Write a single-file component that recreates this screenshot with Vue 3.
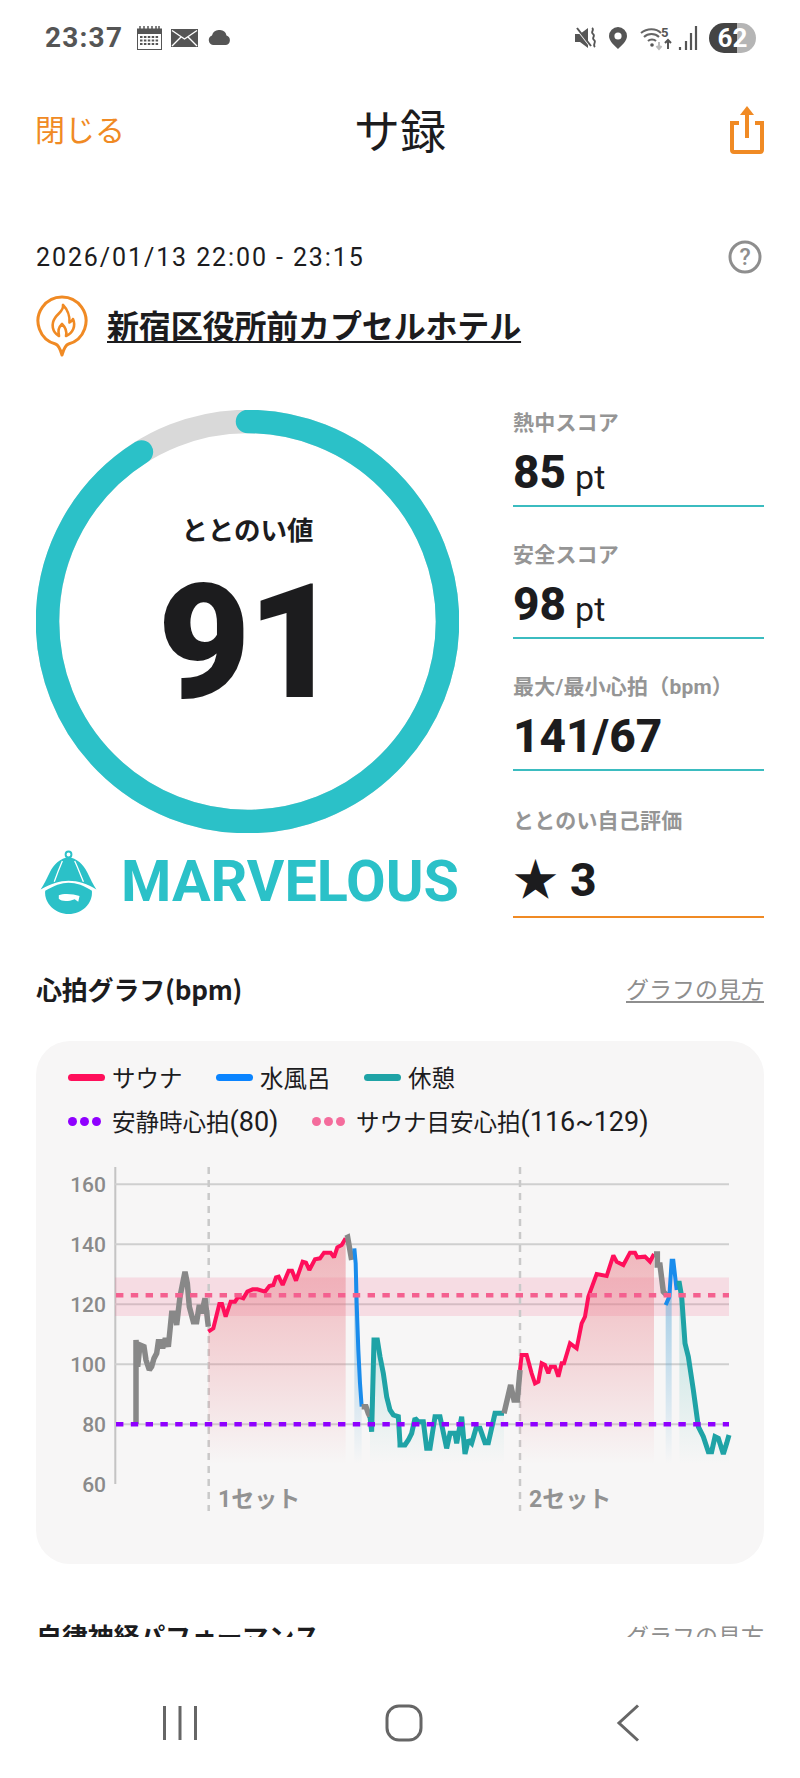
<script setup>
// traced from the graph: [x, y] in two frames, a starts at page x 60, b at page x 400
const fa = (pts) => pts.map(([x, y]) => [60 + x / 3, 1150 + y / 3]);
const fb = (pts) => pts.map(([x, y]) => [400 + x / 3, 1150 + y / 3]);

const segs = [
  { type: 'gray', pts: fa([[228,822],[228,570],[233,650],[240,585],[252,590],[258,630],[268,660],[275,650],[282,625],[290,610],[295,575],[305,575],[308,595],[316,565],[325,590],[335,490],[345,490],[350,525],[360,440],[375,365],[382,400],[388,470],[400,515],[410,515],[418,465],[425,490],[435,445],[445,530]]) },
  { type: 'red', pts: fa([[445,545],[460,535],[478,462],[486,462],[497,500],[512,455],[525,455],[535,440],[550,445],[562,425],[578,418],[592,418],[615,425],[628,408],[640,405],[648,382],[656,380],[668,405],[686,362],[696,362],[708,392],[728,335],[738,338],[748,360],[765,328],[780,325],[792,308],[812,308],[822,322],[832,292],[845,285],[857,265]]) },
  { type: 'gray', pts: fa([[857,265],[863,262],[875,330]]) },
  { type: 'blue', pts: fa([[883,295],[887,340],[890,460],[895,600],[900,700],[905,770]]) },
  { type: 'gray', pts: fa([[905,770],[918,770],[925,790],[930,800]]) },
  { type: 'teal', pts: [...fa([[930,800],[935,845],[942,570],[952,570],[960,620],[970,670],[980,740],[990,780],[1000,795],[1015,800],[1020,880]]), ...fb([[0,885],[15,885],[25,870],[35,850],[45,805],[55,815],[70,815],[80,895],[90,895],[105,800],[120,800],[140,895],[150,850],[165,850],[170,880],[185,800],[195,912],[205,870],[215,880],[228,835],[240,835],[255,878],[265,878],[285,790],[312,790]])] },
  { type: 'gray', pts: fb([[312,790],[332,705],[342,750],[352,750],[360,660]]) },
  { type: 'red', pts: fb([[360,660],[365,615],[380,615],[395,670],[405,700],[415,695],[425,640],[435,645],[445,670],[452,650],[465,650],[475,680],[485,640],[492,640],[510,580],[530,595],[545,520],[555,500],[565,440],[590,372],[620,378],[640,316],[650,335],[670,345],[690,308],[705,308],[712,322],[735,320],[750,335],[762,312]]) },
  { type: 'gray', pts: fb([[762,312],[772,312],[772,345],[780,345],[790,425],[800,435]]) },
  { type: 'blue', areaMax: 673, pts: fb([[797,465],[808,440],[815,332],[820,332],[830,420]]) },
  { type: 'teal', areaMin: 679, pts: fb([[830,400],[838,400],[845,440],[855,580],[865,620],[880,720],[895,830],[910,860],[925,905],[935,905],[945,860],[955,865],[970,912],[980,880],[987,855]]) },
];

const areaOf = (s) => {
  const pts = s.pts.filter(([x]) => x <= (s.areaMax ?? 9999) && x >= (s.areaMin ?? 0));
  return [...pts, [pts[pts.length - 1][0], 1464], [pts[0][0], 1464]].map((p) => p.join(',')).join(' ');
};

const lines = segs.map((s) => ({
  type: s.type,
  line: s.pts.map((p) => p.join(',')).join(' '),
  area: s.type === 'gray' ? null : areaOf(s),
}));

const grid = [160, 140, 120, 100, 80];
const yOf = (v) => 1184.3 + (160 - v) * 3;
const ticks = [160, 140, 120, 100, 80, 60];

const stats = [
  { label: '熱中スコア', value: '85', unit: 'pt' },
  { label: '安全スコア', value: '98', unit: 'pt' },
  { label: '最大/最小心拍（bpm）', value: '141/67', unit: '' },
];
</script>

<template>
  <div class="screen">
    <div class="status">
      <div class="status-left">
        <span class="time">23:37</span>
        <svg class="ic-cal" width="25" height="24" viewBox="0 0 25 24">
          <rect x="0.5" y="3" width="24" height="20.5" fill="none" stroke="#555" />
          <rect x="0" y="3" width="25" height="5" fill="#555" />
          <path d="M3 0v4M7 0v4M11 0v4M15 0v4M19 0v4M22 0v4" stroke="#555" stroke-width="1.5" />
          <path d="M3 11h19M3 14.5h19M3 18h19" stroke="#555" stroke-width="2" stroke-dasharray="2.5 1.4" />
        </svg>
        <svg class="ic-mail" width="27" height="18" viewBox="0 0 27 18">
          <rect width="27" height="18" fill="#555" />
          <path d="M1 1.5 13.5 10 26 1.5M1 17l9-9M26 17l-9-9" fill="none" stroke="#fff" stroke-width="1.4" />
        </svg>
        <svg class="ic-cloud" width="23" height="15" viewBox="0 0 23 15">
          <path d="M5 15a5 5 0 0 1-1-9.6A7.5 7.5 0 0 1 11.5 0a7 7 0 0 1 7 5.4A5 5 0 0 1 18 15Z" fill="#555" />
        </svg>
      </div>
      <div class="status-right">
        <svg class="ic-mute" width="22" height="22" viewBox="0 0 22 22">
          <path d="M0 7h5l8-6v20l-8-6H0Z" fill="#555" />
          <path d="M1 1l14 18" stroke="#fff" stroke-width="2" />
          <path d="M2 1l14 18" stroke="#555" stroke-width="2" />
          <path d="M17 1c3 2-2 4 1 6s-2 4 1 6-2 4 1 7" fill="none" stroke="#555" stroke-width="1.8" />
        </svg>
        <svg class="ic-pin" width="18" height="22" viewBox="0 0 18 22">
          <path d="M9 0a9 9 0 0 1 9 9c0 5-5 9-9 13C5 18 0 14 0 9a9 9 0 0 1 9-9Z" fill="#555" />
          <circle cx="9" cy="9" r="3.6" fill="#fff" />
        </svg>
        <svg class="ic-wifi" width="32" height="26" viewBox="0 0 32 26">
          <path d="M1 8c6-5 15-5 20 0M4 12c4-4 11-4 15 0M8 16c2-2 6-2 8 0" fill="none" stroke="#666" stroke-width="2" />
          <circle cx="12" cy="20" r="1.8" fill="#555" />
          <text x="21" y="12" class="wifi-num">5</text>
          <path d="M19 17v7M16.500 21l2.500 3 2.500-3" fill="none" stroke="#bbb" stroke-width="2" />
          <path d="M28 24v-9M25 18l3-3 3 3" fill="none" stroke="#555" stroke-width="2" />
        </svg>
        <svg class="ic-signal" width="20" height="24" viewBox="0 0 20 24">
          <path d="M2 24v-3M8 24v-9M13 24V7M18 24V0" stroke="#555" stroke-width="2.200" />
        </svg>
        <div class="battery"><span class="battery-num">62</span></div>
      </div>
    </div>

    <header class="head">
      <a class="close">閉じる</a>
      <h1 class="title">サ録</h1>
      <svg class="share" width="34" height="48" viewBox="0 0 34 48">
        <path d="M9 17H2v27a2 2 0 0 0 2 2h26a2 2 0 0 0 2-2V17h-7" fill="none" stroke="#f08a24" stroke-width="4" />
        <path d="M17 32V6" stroke="#f08a24" stroke-width="4" />
        <path d="M17 0l7 9H10Z" fill="#f08a24" />
      </svg>
    </header>

    <main class="content">
      <div class="date-row">
        <span class="date">2026/01/13 22:00 - 23:15</span>
        <svg width="34" height="34" viewBox="0 0 34 34">
          <circle cx="17" cy="17" r="15" fill="none" stroke="#8e8e8e" stroke-width="3" />
          <text x="17" y="25" text-anchor="middle" class="help">?</text>
        </svg>
      </div>

      <div class="place-row">
        <svg width="52" height="62" viewBox="0 0 52 62">
          <path d="M19.500 49A24 24 0 1 1 32.500 49C29.500 50 28 53 26 60 24 53 22.500 50 19.500 49Z" fill="none" stroke="#f08a24" stroke-width="3" stroke-linejoin="round" />
          <path d="M27 10C28 16 22 18 19 23 15 29 16 37 23 41 22 36 22 33 26 29 30 33 31 37 30 41 37 38 40 31 37 24 36 26 35 27 33.500 27.500 34 21 31 14 27 10Z" fill="none" stroke="#f08a24" stroke-width="2.600" stroke-linejoin="round" />
        </svg>
        <a class="place">新宿区役所前カプセルホテル</a>
      </div>

      <section class="score">
        <div class="score-left">
          <div class="ring">
            <svg width="423" height="423" viewBox="0 0 423 423">
              <circle cx="211.500" cy="211.500" r="200" fill="none" stroke="#d9d9d9" stroke-width="23.500" />
              <circle cx="211.500" cy="211.500" r="200" fill="none" stroke="#2bc1c8" stroke-width="23.500" stroke-linecap="round" pathLength="100" stroke-dasharray="91.100 100" transform="rotate(-90 211.500 211.500)" />
            </svg>
            <div class="ring-text">
              <span class="ring-label">ととのい値</span>
              <span class="ring-num">91</span>
            </div>
          </div>
          <div class="rank">
            <svg width="59" height="66" viewBox="28 30 176 198">
              <circle cx="116" cy="44" r="9" fill="none" stroke="#2bc1c8" stroke-width="6" />
              <path d="M116 52C92 56 70 74 58 100 48 120 40 138 30 152 60 135 90 125 116 125 145 125 175 135 202 152 192 138 184 120 174 100 162 74 140 56 116 52Z" fill="#2bc1c8" />
              <path d="M97 64C88 85 80 105 72 128M135 64C145 85 152 105 162 128" fill="none" stroke="#fff" stroke-width="4" />
              <path d="M44 156C70 140 95 131 116 131 140 131 165 140 188 156 192 195 157 228 116 228 76 228 40 195 44 156Z" fill="#2bc1c8" />
              <path d="M86 170C100 163 130 165 150 172L146 190 135 182C115 190 95 190 86 181Z" fill="#fff" />
            </svg>
            <span class="rank-name">MARVELOUS</span>
          </div>
        </div>

        <div class="score-right">
          <div v-for="s in stats" :key="s.label" class="stat">
            <div class="stat-label">{{ s.label }}</div>
            <div class="stat-value"><b>{{ s.value }}</b><span v-if="s.unit" class="unit">{{ s.unit }}</span></div>
          </div>
          <div class="stat self">
            <div class="stat-label">ととのい自己評価</div>
            <div class="stat-value"><span class="star">★</span><b>3</b></div>
          </div>
        </div>
      </section>

      <div class="section-head first">
        <h2>心拍グラフ(bpm)</h2>
        <a>グラフの見方</a>
      </div>

      <div class="card">
        <div class="legend">
          <span class="bar red"></span><span class="lg-text">サウナ</span>
          <span class="bar blue"></span><span class="lg-text">水風呂</span>
          <span class="bar teal"></span><span class="lg-text">休憩</span>
        </div>
        <div class="legend">
          <span class="dots purple"><i></i><i></i><i></i></span><span class="lg-text">安静時心拍<span class="lg-num">(80)</span></span>
          <span class="dots pink"><i></i><i></i><i></i></span><span class="lg-text">サウナ目安心拍<span class="lg-num">(116~129)</span></span>
        </div>

        <svg class="chart" width="728" height="370" viewBox="36 1150 728 370">
          <defs>
            <linearGradient id="gRed" gradientUnits="userSpaceOnUse" x1="0" y1="1240" x2="0" y2="1464">
              <stop offset="0" stop-color="#e8737f" stop-opacity="0.5" />
              <stop offset="0.5" stop-color="#e8737f" stop-opacity="0.26" />
              <stop offset="1" stop-color="#e8737f" stop-opacity="0" />
            </linearGradient>
            <linearGradient id="gBlue" gradientUnits="userSpaceOnUse" x1="0" y1="1300" x2="0" y2="1464">
              <stop offset="0" stop-color="#5aa9d8" stop-opacity="0.5" />
              <stop offset="1" stop-color="#5aa9d8" stop-opacity="0" />
            </linearGradient>
            <linearGradient id="gTeal" gradientUnits="userSpaceOnUse" x1="0" y1="1300" x2="0" y2="1464">
              <stop offset="0" stop-color="#40b5b0" stop-opacity="0.3" />
              <stop offset="1" stop-color="#40b5b0" stop-opacity="0" />
            </linearGradient>
          </defs>

          <line x1="115.300" y1="1167" x2="115.300" y2="1484" class="axis" />
          <line v-for="v in grid" :key="v" x1="115" x2="729" :y1="yOf(v)" :y2="yOf(v)" class="grid" />
          <rect x="115" y="1277.500" width="614" height="38.500" fill="#f6678f" fill-opacity="0.18" />

          <line x1="208.700" y1="1167" x2="208.700" y2="1511" class="split" />
          <line x1="520" y1="1167" x2="520" y2="1511" class="split" />

          <template v-for="(l, i) in lines" :key="'a' + i">
            <polygon v-if="l.area" :points="l.area" :fill="l.type === 'red' ? 'url(#gRed)' : l.type === 'blue' ? 'url(#gBlue)' : 'url(#gTeal)'" />
          </template>
          <polyline v-for="(l, i) in lines" :key="'l' + i" :points="l.line" :class="['hr', l.type]" />

          <line x1="116" y1="1295.300" x2="729" y2="1295.300" class="limit pink" />
          <line x1="116" y1="1424.300" x2="729" y2="1424.300" class="limit purple" />

          <text v-for="v in ticks" :key="v" x="106" :y="yOf(v) + 7.500" class="tick">{{ v }}</text>
          <text x="218" y="1507" class="set">1セット</text>
          <text x="529" y="1507" class="set">2セット</text>
        </svg>
      </div>

      <div class="section-head second">
        <h2>自律神経パフォーマンス</h2>
        <a>グラフの見方</a>
      </div>
    </main>

    <nav class="nav">
      <svg width="34" height="34" viewBox="0 0 34 34">
        <path d="M1.500 0v34M17 0v34M32.500 0v34" stroke="#666" stroke-width="3" />
      </svg>
      <svg class="home" width="38" height="38" viewBox="0 0 38 38">
        <rect x="2" y="2" width="34" height="34" rx="12" fill="none" stroke="#666" stroke-width="3" />
      </svg>
      <svg class="back" width="24" height="38" viewBox="0 0 24 38">
        <path d="M22 1.500 3 19l19 17.500" fill="none" stroke="#666" stroke-width="3" />
      </svg>
    </nav>
  </div>
</template>

<style>
html, body { margin: 0; background: #fff; }
</style>

<style scoped>
.screen {
  width: 800px;
  height: 1778px;
  display: flex;
  flex-direction: column;
  overflow: hidden;
  background: #fff;
  color: #1c1c1e;
  font-family: Roboto, "Noto Sans CJK JP", sans-serif;
}

.status {
  height: 75px;
  flex: none;
  display: flex;
  align-items: center;
  justify-content: space-between;
  padding: 0 44px 0 45px;
}
.status-left, .status-right { display: flex; align-items: center; }
.time { font-size: 28px; font-weight: 700; color: #555; letter-spacing: 1.200px; width: 92px; }
.ic-mail { margin-left: 9px; }
.ic-cloud { margin-left: 10px; }
.ic-pin { margin-left: 12px; }
.ic-wifi { margin-left: 13px; }
.ic-signal { margin-left: 6px; }
.wifi-num { font-size: 13px; font-weight: 700; fill: #555; }
.battery {
  width: 47px;
  height: 30px;
  border-radius: 15px;
  background: linear-gradient(90deg, #444 0 28px, #b5b5b5 28px);
  display: flex;
  align-items: center;
  justify-content: center;
  margin-left: 11px;
}
.battery-num { color: #fff; font-size: 26px; font-weight: 700; line-height: 30px; }

.head {
  height: 110px;
  flex: none;
  display: grid;
  grid-template-columns: 1fr auto 1fr;
  align-items: center;
  padding: 0 36px;
}
.close { font-size: 30px; color: #f08a24; font-family: "Noto Sans CJK JP", sans-serif; margin: -4px 0 0 -1px; }
.title { margin: -4px 0 0; font-size: 46px; font-weight: 400; line-height: 60px; font-family: "Noto Sans CJK JP", sans-serif; }
.share { justify-self: end; }

.content {
  flex: 1;
  min-height: 0;
  overflow: hidden;
  padding: 52px 36px 0;
}

.date-row { height: 40px; display: flex; align-items: center; justify-content: space-between; padding-right: 2px; }
.date { font-size: 25px; letter-spacing: 1.900px; }
.help { font-size: 23px; font-weight: 500; fill: #8e8e8e; }

.place-row { display: flex; align-items: center; margin-top: 18px; height: 62px; gap: 19px; }
.place {
  font-size: 32px;
  font-weight: 700;
  line-height: 44px;
  letter-spacing: -0.150px;
  margin-top: -4px;
  font-family: "Noto Sans CJK JP", sans-serif;
  text-decoration: underline;
  text-underline-offset: 3px;
  text-decoration-thickness: 2px;
}

.score { display: flex; justify-content: space-between; margin-top: 51px; }
.score-left { width: 423px; padding-top: 2px; }
.ring { position: relative; width: 423px; height: 423px; }
.ring svg { display: block; }
.ring-text {
  position: absolute;
  inset: 0;
  display: flex;
  flex-direction: column;
  align-items: center;
  padding-top: 99px;
}
.ring-label { font-size: 26.500px; line-height: 40px; font-weight: 700; font-family: "Noto Sans CJK JP", sans-serif; }
.ring-num { font-size: 160px; line-height: 130px; margin-top: 29px; font-weight: 900; letter-spacing: -3px; }
.rank { display: flex; align-items: center; margin-top: 16px; padding-left: 4px; gap: 24px; }
.rank-name { font-size: 57.500px; font-weight: 700; color: #2bc1c8; line-height: 66px; }

.score-right { width: 251px; display: flex; flex-direction: column; gap: 33px; }
.stat { border-bottom: 2px solid #3bbcc0; }
.stat-label { font-size: 21px; line-height: 30px; font-weight: 700; color: #959595; letter-spacing: 0.200px; }
.stat-value { height: 67px; display: flex; align-items: center; }
.stat-value b { font-size: 46px; font-weight: 800; }
.unit { font-size: 34px; margin-left: 9px; margin-top: 10px; }
.self { border-bottom-color: #f08a24; padding-top: 2px; }
.self .stat-value { height: 80px; padding-top: 8px; box-sizing: border-box; }
.star { font-size: 45px; line-height: 50px; margin-top: -7px; font-family: "Noto Sans CJK JP", sans-serif; margin-right: 12px; }

.section-head { height: 40px; display: flex; align-items: center; justify-content: space-between; }
.section-head h2 { margin: 0; font-size: 26px; font-weight: 700; letter-spacing: -0.200px; font-family: "Noto Sans CJK JP", sans-serif; }
.section-head a { font-size: 23px; color: #8e8e8e; text-decoration: underline; text-underline-offset: 3px; font-family: "Noto Sans CJK JP", sans-serif; }
.section-head.first { margin-top: 50px; }
.section-head.second { margin-top: 51px; }

.card {
  margin-top: 33px;
  height: 523px;
  box-sizing: border-box;
  padding-top: 14px;
  border-radius: 34px;
  background: #f7f6f6;
}
.legend { height: 44px; display: flex; align-items: center; padding-left: 32px; }
.lg-text { font-size: 23.500px; margin-left: 7px; margin-right: 33.500px; font-family: Roboto, "Noto Sans CJK JP", sans-serif; }
.lg-num { font-size: 27px; }
.bar { width: 37px; height: 7px; border-radius: 4px; }
.bar.red { background: #ff0f5b; }
.bar.blue { background: #0a84ff; }
.bar.teal { background: #1fa3a6; }
.dots { display: flex; width: 33px; justify-content: space-between; margin-right: 4px; }
.dots i { width: 9px; height: 9px; border-radius: 50%; display: block; }
.dots.purple i { background: #8f00ff; }
.dots.pink i { background: #f46c9c; }

.chart { display: block; margin-top: 7px; }
.axis { stroke: #c4c4c4; stroke-width: 2; }
.grid { stroke: #cfcfcf; stroke-width: 2; }
.split { stroke: #c9c9c9; stroke-width: 2.500; stroke-dasharray: 7 6; }
.hr { fill: none; stroke-width: 4; stroke-linejoin: miter; stroke-miterlimit: 2; }
.hr.gray { stroke: #888; stroke-width: 5.500; }
.hr.red { stroke: #ff0f5b; }
.hr.blue { stroke: #1a8cec; }
.hr.teal { stroke: #1fa3a6; stroke-width: 5; }
.limit { stroke-width: 4.500; stroke-dasharray: 7.400 7.400; }
.limit.pink { stroke: #f4608f; }
.limit.purple { stroke: #8f00ff; }
.tick { font-size: 21px; font-weight: 500; fill: #8a8a8a; text-anchor: end; }
.set { font-size: 23px; font-weight: 700; fill: #929292; font-family: Roboto, "Noto Sans CJK JP", sans-serif; }

.nav {
  height: 141px;
  flex: none;
  box-sizing: border-box;
  padding: 30px 0 0 163px;
  background: #fff;
  display: flex;
  align-items: center;
}
.home { margin-left: 188px; }
.back { margin-left: 193px; }
</style>
